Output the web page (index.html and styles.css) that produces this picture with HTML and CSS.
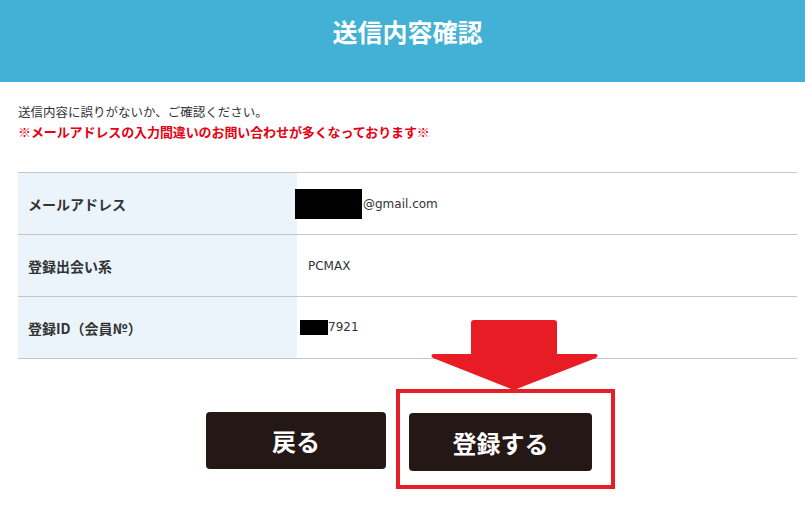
FILE: index.html
```html
<!DOCTYPE html>
<html lang="ja">
<head>
  <meta charset="UTF-8">
  <meta name="viewport" content="width=device-width, initial-scale=1.0">
  <title>送信内容確認</title>
  <link rel="stylesheet" href="styles.css">
</head>
<body>
  <header class="page-header">
    <h1>送信内容確認</h1>
  </header>

  <main class="confirm">
    <p class="lead">送信内容に誤りがないか、ご確認ください。</p>
    <p class="notice">※メールアドレスの入力間違いのお問い合わせが多くなっております※</p>

    <table class="confirm-table">
      <tr>
        <th>メールアドレス</th>
        <td><span class="mask mask-mail"></span>@gmail.com</td>
      </tr>
      <tr>
        <th>登録出会い系</th>
        <td>PCMAX</td>
      </tr>
      <tr>
        <th>登録ID（会員№）</th>
        <td><span class="mask mask-id"></span>7921</td>
      </tr>
    </table>

    <div class="actions">
      <button type="button" class="btn">戻る</button>
      <div class="focus-wrap">
        <!-- annotation: arrow + outline -->
        <svg class="pointer" width="169" height="71" viewBox="0 0 169 71">
          <rect x="41" y="0" width="86" height="36" rx="3" fill="#e81c24"/>
          <path d="M3 34 L166 34 Q169 35 166 38 L84 70 L3 38 Q0 35 3 34 Z" fill="#e81c24"/>
        </svg>
        <span class="outline"></span>
        <button type="submit" class="btn">登録する</button>
      </div>
    </div>
  </main>
</body>
</html>
```

FILE: styles.css
```css
* {
  margin: 0;
  padding: 0;
  box-sizing: border-box;
}

html,
body {
  min-height: 100%;
}

body {
  background: #fff;
  font-family: "Noto Sans CJK JP", "Noto Sans", sans-serif;
  color: #333;
}

.page-header {
  background: #43b1d5;
  height: 82px;
  padding: 14px 0 0 10px;
  text-align: center;
}

.page-header h1 {
  color: #fff;
  font-size: 25px;
  font-weight: 700;
  line-height: 34px;
}

.confirm {
  padding: 20px 8px 60px 18px;
}

.lead {
  font-size: 12.5px;
  line-height: 20px;
  color: #333;
}

.notice {
  font-size: 13px;
  line-height: 20px;
  font-weight: 700;
  color: #e60012;
  letter-spacing: -0.1px;
}

.confirm-table {
  width: 100%;
  margin-top: 30px;
  border-collapse: collapse;
}

.confirm-table tr {
  border-top: 1px solid #c6c6c6;
  border-bottom: 1px solid #c6c6c6;
}

.confirm-table th,
.confirm-table td {
  height: 62px;
  vertical-align: middle;
  text-align: left;
}

.confirm-table th {
  width: 279px;
  background: #ebf4fb;
  padding-left: 10px;
  font-size: 14px;
  font-weight: 700;
  color: #333;
}

.confirm-table td {
  padding-left: 11px;
  font-family: "DejaVu Sans", "Noto Sans CJK JP", sans-serif;
  font-size: 12px;
  color: #333;
}

.mask {
  display: inline-block;
  background: #000;
  vertical-align: middle;
}

.mask-mail {
  width: 67px;
  height: 30px;
  margin-left: -13px;
  margin-right: 1px;
}

.mask-id {
  width: 28px;
  height: 15px;
  margin-left: -8px;
}

.actions {
  display: flex;
  justify-content: center;
  align-items: flex-start;
  gap: 23px;
  padding-top: 53px;
  padding-right: 17px;
}

.btn {
  width: 180px;
  height: 57px;
  background: #231815;
  border: none;
  border-radius: 4px;
  color: #fff;
  font-family: "Noto Sans CJK JP", sans-serif;
  font-size: 24px;
  font-weight: 700;
  cursor: pointer;
}

.focus-wrap {
  position: relative;
}

.focus-wrap .btn {
  width: 183px;
  height: 58px;
  margin-top: 1px;
}

.outline {
  position: absolute;
  left: -13px;
  top: -23px;
  width: 219px;
  height: 100px;
  border: 4px solid #e51f28;
}

.pointer {
  position: absolute;
  left: 21px;
  top: -92px;
}
```
